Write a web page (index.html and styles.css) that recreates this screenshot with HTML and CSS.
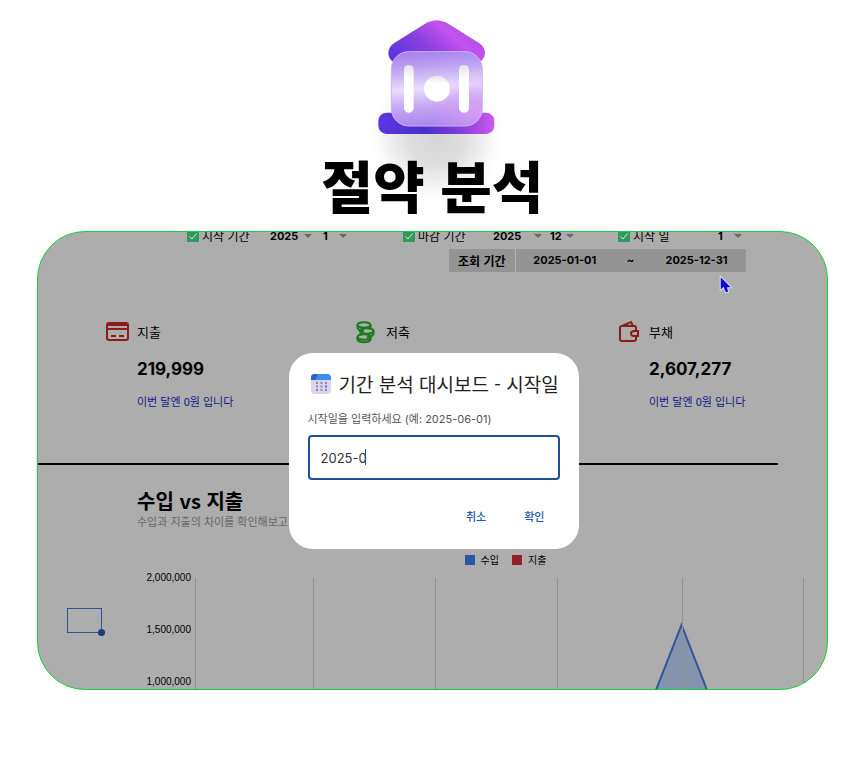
FILE: index.html
```html
<!DOCTYPE html>
<html lang="ko">
<head>
    <meta charset="UTF-8">
    <meta name="viewport" content="width=device-width, initial-scale=1.0">
    <title>절약 분석</title>
    <link rel="stylesheet" href="styles.css">
</head>
<body>

    <header class="hero">
        <svg class="hero-logo" viewBox="-6 0 450 420" aria-hidden="true">
            <defs>
                <linearGradient id="roof" x1="0" y1="0.8" x2="1" y2="0.3">
                    <stop offset="0" stop-color="#5b35e0"/>
                    <stop offset="0.4" stop-color="#8a3fdf"/>
                    <stop offset="0.7" stop-color="#c552ee"/>
                    <stop offset="1" stop-color="#a04be8"/>
                </linearGradient>
                <linearGradient id="base" x1="0" y1="0" x2="1" y2="0">
                    <stop offset="0" stop-color="#5a36e4"/>
                    <stop offset="0.4" stop-color="#4a2fc9"/>
                    <stop offset="0.75" stop-color="#8c40dc"/>
                    <stop offset="1" stop-color="#cf58f2"/>
                </linearGradient>
                <linearGradient id="glass" x1="0.45" y1="0" x2="0.55" y2="1">
                    <stop offset="0" stop-color="#a884ee"/>
                    <stop offset="0.2" stop-color="#bda2f2"/>
                    <stop offset="0.48" stop-color="#e9ddfb"/>
                    <stop offset="0.72" stop-color="#c4a6f3"/>
                    <stop offset="1" stop-color="#a885ef"/>
                </linearGradient>
                <radialGradient id="pink" cx="0.95" cy="0.8" r="0.5">
                    <stop offset="0" stop-color="#dd9df3" stop-opacity="0.8"/>
                    <stop offset="1" stop-color="#dd9df3" stop-opacity="0"/>
                </radialGradient>
                <linearGradient id="hole" x1="0" y1="0" x2="0" y2="1">
                    <stop offset="0" stop-color="#e4e2e8"/>
                    <stop offset="0.3" stop-color="#ffffff"/>
                </linearGradient>
                <radialGradient id="shade">
                    <stop offset="0" stop-color="#d6d6d6"/>
                    <stop offset="0.4" stop-color="#dedede"/>
                    <stop offset="0.7" stop-color="#efefef" stop-opacity="0.8"/>
                    <stop offset="1" stop-color="#ffffff" stop-opacity="0"/>
                </radialGradient>
            </defs>
            <ellipse cx="230" cy="380" rx="215" ry="210" fill="url(#shade)"/>
            <path d="M200 38Q230 23 260 38L357 99Q375 110 375 130Q374 145 360 157H100Q86 147 85 130Q85 110 103 99Z" fill="url(#roof)"/>
            <rect x="55" y="308" width="348" height="64" rx="25" fill="url(#base)"/>
            <rect x="94" y="125" width="273" height="223" rx="52" fill="url(#glass)"/>
            <rect x="94" y="125" width="273" height="223" rx="52" fill="url(#pink)" stroke="#cdb4f6" stroke-width="3"/>
            <rect x="132" y="165" width="29" height="143" rx="14" fill="url(#hole)"/>
            <rect x="297" y="165" width="30" height="143" rx="14" fill="url(#hole)"/>
            <circle cx="231" cy="236" r="39" fill="url(#hole)"/>
        </svg>
        <h1>절약 분석</h1>
    </header>

    <main class="screen">
        <!-- Filters -->
        <div class="filters">
            <label class="filter-label" for="startYear">
                <svg class="check" viewBox="0 0 12 12"><rect width="12" height="12" rx="1"/><path d="M2.5 6.5L5 9L9.5 3.5"/></svg>시작 기간
            </label>
            <span class="picker year"><select id="startYear"><option>2025</option></select></span>
            <span class="picker month"><select aria-label="시작 월"><option>1</option></select></span>
            <label class="filter-label" for="endYear">
                <svg class="check" viewBox="0 0 12 12"><rect width="12" height="12" rx="1"/><path d="M2.5 6.5L5 9L9.5 3.5"/></svg>마감 기간
            </label>
            <span class="picker year wide"><select id="endYear"><option>2025</option></select></span>
            <span class="picker month"><select aria-label="마감 월"><option>12</option></select></span>
            <label class="filter-label" for="startDay">
                <svg class="check" viewBox="0 0 12 12"><rect width="12" height="12" rx="1"/><path d="M2.5 6.5L5 9L9.5 3.5"/></svg>시작 일
            </label>
            <span class="picker month"><select id="startDay"><option>1</option></select></span>
        </div>

        <table class="period">
            <tr>
                <th scope="row">조회 기간</th>
                <td class="date">2025-01-01</td>
                <td class="tilde">~</td>
                <td class="date">2025-12-31</td>
            </tr>
        </table>

        <!-- Summary -->
        <section class="summary">
            <div class="card">
                <svg class="card-icon red" viewBox="0 0 24 24"><rect x="1" y="3" width="21" height="17" rx="2"/><path d="M1 5H22M1 9H22M5 16H10M13 16H18"/></svg>
                <h3>지출</h3>
                <strong>219,999</strong>
                <p>이번 달엔 0원 입니다</p>
            </div>
            <div class="card">
                <svg class="card-icon green" viewBox="0 0 24 24"><ellipse cx="9" cy="5" rx="6.500" ry="2.800"/><path d="M2.500 5V8Q4 11 9 11M15.500 5V8"/><ellipse cx="12" cy="11" rx="6.500" ry="2.800"/><path d="M18.500 11V14Q17 17 12 17M5.500 11V14"/><ellipse cx="9" cy="17" rx="6.500" ry="2.800"/><path d="M2.500 17V19.500C4 23 14 23 15.500 19.500V17"/></svg>
                <h3>저축</h3>
            </div>
            <div class="card">
                <svg class="card-icon red" viewBox="0 0 24 24"><path d="M18 10V8Q18 6 16 6H4Q2 6 2 8V19Q2 21 4 21H16Q18 21 18 19V17M4 6L13 2L15 6M20 11H16Q13 11 13 13.500Q13 16 16 16H20Z"/></svg>
                <h3>부채</h3>
                <strong>2,607,277</strong>
                <p>이번 달엔 0원 입니다</p>
            </div>
        </section>

        <hr class="divider">

        <!-- Chart -->
        <section class="chart">
            <h2>수입 vs 지출</h2>
            <p class="chart-text">수입과 지출의 차이를 확인해보고 관</p>
            <div class="legend">
                <span class="key income">수입</span>
                <span class="key expense">지출</span>
            </div>
            <div class="chart-body">
                <div class="cell"><span class="cell-handle"></span></div>
                <div class="axis">
                    <span>2,000,000</span>
                    <span>1,500,000</span>
                    <span>1,000,000</span>
                </div>
                <svg class="plot" viewBox="0 0 632 112" preserveAspectRatio="none">
                    <path class="area" d="M461 112L486.500 47L512 112"/>
                    <path class="grid" d="M0.500 0V112M118.500 0V112M240.500 0V112M362.500 0V112M487.500 0V112M608.500 0V112"/>
                </svg>
            </div>
        </section>

        <form class="dialog">
            <h2>
                <svg class="calendar" viewBox="0 0 20 20">
                    <rect width="20" height="20" rx="4" fill="#ddd3f0"/>
                    <path d="M0 6V4Q0 0 4 0H16Q20 0 20 4V6Z" fill="#3f8cf0"/>
                    <path d="M0 6V4Q0 0 4 0H7L4 6Z" fill="#2f62cf"/>
                    <path d="M5 9H16M5 12.500H16M5 16H16" stroke="#8d87a8" stroke-width="2" stroke-dasharray="2 2.500"/>
                    <path d="M14 12.500H16" stroke="#3f8cf0" stroke-width="2"/>
                </svg>
                기간 분석 대시보드 - 시작일
            </h2>
            <label for="startDate">시작일을 입력하세요 (예: 2025-06-01)</label>
            <div class="field">
                <input type="text" id="startDate" value="2025-0">
                <span class="caret"></span>
            </div>
            <div class="actions">
                <button type="button">취소</button>
                <button type="button">확인</button>
            </div>
        </form>

        <svg class="cursor" viewBox="0 0 12 18"><path d="M1 1V15L4 12L6 17L9 16L8 12H12Z"/></svg>
    </main>

</body>
</html>
```
FILE: styles.css
```css
* {
    box-sizing: border-box;
}

body {
    margin: 0;
    padding: 10px 32px 73px 37px;
    font-family: Inter, 'Noto Sans CJK KR', sans-serif;
    background-color: #fff;
    color: #000;
}

h1, h2, h3, p {
    margin: 0;
}

h1, h2, h3, p, th {
    font-family: 'Noto Sans CJK KR', sans-serif;
}

/* Header */
.hero {
    display: flex;
    flex-direction: column;
    align-items: center;
}

.hero-logo {
    width: 150px;
    height: 140px;
    overflow: visible;
}

.hero h1 {
    position: relative;
    margin-bottom: 13px;
    font-size: 56px;
    font-weight: 900;
    line-height: 68px;
    white-space: nowrap;
}

/* Dashboard frame */
.screen {
    position: relative;
    height: 459px;
    overflow: hidden;
    border: 1px solid #0bd63b;
    border-radius: 48px;
    background-color: #adadad;
}

/* Filters */
.filters {
    display: grid;
    grid-template-columns: 83fr 53fr 80fr 90fr 57fr 68fr 100fr 109fr;
    align-items: center;
    height: 20px;
    margin-top: -6px;
    padding-left: 149px;
    font-size: 12px;
    line-height: 20px;
}

.filter-label {
    display: flex;
    align-items: center;
    gap: 3px;
    font-family: 'Noto Sans CJK KR', sans-serif;
    white-space: nowrap;
}

.check {
    width: 12px;
    height: 12px;
}

.check rect {
    fill: #2f9a5c;
}

.check path {
    fill: none;
    stroke: #d5e5d8;
    stroke-width: 1;
}

.picker {
    display: flex;
    align-items: center;
    justify-content: space-between;
}

.picker::after {
    content: "";
    border: 4px solid transparent;
    border-top-color: #666;
    border-bottom: 0;
}

.picker select {
    appearance: none;
    padding: 0;
    border: 0;
    background: none;
    color: #000;
    font: bold 11px/20px Inter, sans-serif;
}

.year {
    width: 42px;
}

.year.wide {
    width: 49px;
}

.month {
    width: 24px;
}

/* Period */
.period {
    height: 23px;
    margin: 3px 81px 0 auto;
    border-collapse: collapse;
    background-color: #949494;
    font-size: 11px;
    font-weight: bold;
    line-height: 23px;
    text-align: center;
}

.period th,
.period td {
    padding: 0;
}

.period th {
    width: 66px;
    border-right: 1px solid #b5b5b5;
    font-size: 12px;
}

.period .date {
    width: 99px;
}

.period .tilde {
    width: 33px;
}

/* Summary */
.summary {
    display: grid;
    grid-template-columns: 249fr 263fr 209fr;
    height: 191px;
    padding: 48px 0 0 68px;
}

.card {
    display: grid;
    grid-template-columns: 24px 1fr;
    column-gap: 7px;
    align-content: start;
}

.card-icon {
    width: 24px;
    height: 24px;
    fill: none;
    stroke-width: 2;
}

.card-icon.red {
    stroke: #8c1c1c;
}

.card-icon.green {
    stroke: #1a7a20;
}

.card h3 {
    font-size: 13px;
    font-weight: 400;
    line-height: 24px;
}

.card strong {
    grid-column: 2;
    margin-top: 12px;
    font-size: 17px;
    line-height: 26px;
}

.card p {
    grid-column: 2;
    margin-top: 9px;
    color: #16168c;
    font-size: 11px;
    line-height: 20px;
}

.divider {
    height: 2px;
    margin: 0 49px 0 0;
    border: 0;
    background-color: #000;
}

/* Chart */
.chart h2 {
    margin: 23px 0 0 99px;
    font-size: 20px;
    line-height: 26px;
}

.chart-text {
    margin-left: 99px;
    color: #666;
    font-size: 11px;
    line-height: 14px;
}

.legend {
    display: flex;
    justify-content: center;
    gap: 13px;
    margin-top: 24px;
    padding-left: 146px;
    font-size: 10px;
    line-height: 16px;
}

.key {
    display: flex;
    align-items: center;
    gap: 6px;
}

.key::before {
    content: "";
    width: 10px;
    height: 10px;
}

.income::before {
    background-color: #2858a8;
}

.expense::before {
    background-color: #941f24;
}

.chart-body {
    display: grid;
    grid-template-columns: 35px 85px 1fr;
    column-gap: 4px;
    margin-top: 4px;
    padding-left: 29px;
}

.cell {
    position: relative;
    height: 25px;
    margin-top: 36px;
    border: 1px solid #2c4f96;
}

.cell-handle {
    position: absolute;
    right: -4px;
    bottom: -4px;
    width: 7px;
    height: 7px;
    border-radius: 50%;
    background-color: #1d3a80;
}

.axis {
    display: flex;
    flex-direction: column;
    gap: 40px;
    font-family: 'Liberation Sans', sans-serif;
    font-size: 10px;
    line-height: 12px;
    text-align: right;
}

.plot {
    width: 100%;
    height: 112px;
    margin-top: 6px;
}

.grid {
    fill: none;
    stroke: #929292;
}

.area {
    fill: #8493ae;
    stroke: #34549a;
    stroke-width: 2;
}

/* Dialog */
.dialog {
    position: absolute;
    top: 121px;
    left: 50%;
    width: 290px;
    margin-left: -144px;
    padding: 18px 19px 20px;
    border-radius: 24px;
    background-color: #fff;
}

.dialog h2 {
    display: flex;
    align-items: center;
    gap: 8px;
    padding-left: 3px;
    color: #1f1f1f;
    font-size: 19px;
    font-weight: 400;
    line-height: 26px;
    white-space: nowrap;
}

.calendar {
    flex: none;
    width: 20px;
    height: 20px;
}

.dialog label {
    display: block;
    margin-top: 12px;
    color: #555;
    font-size: 11px;
    line-height: 20px;
}

.field {
    position: relative;
    margin-top: 6px;
}

.field input {
    display: block;
    width: 100%;
    height: 45px;
    padding: 0 11px;
    border: 2px solid #1f4f9a;
    border-radius: 4px;
    outline: 0;
    color: #333;
    font: 13px Inter, sans-serif;
}

.caret {
    position: absolute;
    top: 14px;
    left: 57px;
    width: 1px;
    height: 16px;
    background-color: #1f4f9a;
}

.actions {
    display: flex;
    justify-content: flex-end;
    gap: 14px;
    margin-top: 23px;
    padding-right: 3px;
}

.actions button {
    padding: 0 12px;
    border: 0;
    background: none;
    color: #2257ad;
    font: 500 11px/26px 'Noto Sans CJK KR', sans-serif;
    cursor: pointer;
}

/* Pointer over the frame */
.cursor {
    position: absolute;
    top: 43px;
    right: 95px;
    width: 13px;
    height: 19px;
    fill: #0a0ae0;
    stroke: #d8d8e8;
    stroke-width: 1;
}
```
